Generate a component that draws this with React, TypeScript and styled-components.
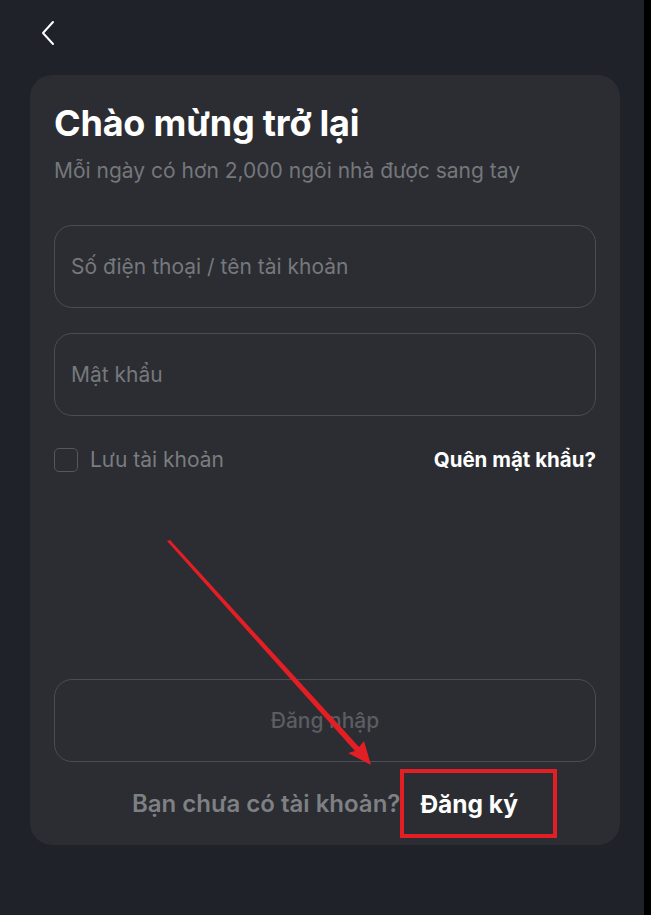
import * as React from 'react';
import styled, { createGlobalStyle } from 'styled-components';

const GlobalStyle = createGlobalStyle`
  html, body {
    margin: 0;
    padding: 0;
    background: #000;
    overflow: hidden;
  }
  body {
    font-family: Inter, "Noto Sans", "Liberation Sans", sans-serif;
  }
`;

const Page = styled.div`
  display: flex;
  width: 651px;
  height: 915px;
  overflow: hidden;
`;

const Screen = styled.div`
  position: relative;
  flex: 1;
  background: #1f2229;
  padding: 0 24px 0 30px;
  box-sizing: border-box;
`;

const Scrollbar = styled.div`
  width: 7px;
  flex-shrink: 0;
  background: #000;
`;

const TopBar = styled.div`
  height: 75px;
  display: flex;
  align-items: center;
  padding-left: 11px;
  padding-bottom: 9px;
  box-sizing: border-box;
`;

const BackButton = styled.button`
  background: none;
  border: none;
  padding: 0;
  display: flex;
  cursor: pointer;
`;

const Card = styled.div`
  height: 770px;
  background: #2b2d32;
  border-radius: 22px;
  padding: 24px 24px 25px;
  box-sizing: border-box;
  display: flex;
  flex-direction: column;
`;

const Title = styled.h1`
  margin: 0;
  font-size: 36px;
  line-height: 48px;
  font-weight: 700;
  color: #fff;
  letter-spacing: -0.2px;
`;

const Subtitle = styled.p`
  margin: 10px 0 0;
  font-size: 21px;
  line-height: 28px;
  color: #75777b;
`;

const Field = styled.div<{ $top: number }>`
  margin-top: ${p => p.$top}px;
  height: 83px;
  border: 1px solid #4b4d52;
  border-radius: 18px;
  box-sizing: border-box;
  display: flex;
  align-items: center;
  padding: 0 16px;
`;

const Input = styled.input`
  flex: 1;
  padding: 0;
  background: transparent;
  border: none;
  outline: none;
  font-family: inherit;
  font-size: 21px;
  color: #fff;
  &::placeholder {
    color: #76787c;
  }
`;

const OptionsRow = styled.div`
  margin-top: 31px;
  display: flex;
  align-items: center;
  justify-content: space-between;
`;

const Remember = styled.label`
  display: flex;
  align-items: center;
  gap: 12px;
  font-size: 21px;
  color: #7a7c80;
`;

const Checkbox = styled.span`
  width: 24px;
  height: 24px;
  border: 1px solid #55575c;
  border-radius: 5px;
  box-sizing: border-box;
`;

const Forgot = styled.a`
  font-size: 20.5px;
  font-weight: 700;
  color: #fff;
  text-decoration: none;
`;

const Spacer = styled.div`
  flex: 1;
`;

const LoginButton = styled.button`
  height: 83px;
  width: 100%;
  flex-shrink: 0;
  background: transparent;
  border: 1px solid #4b4d52;
  border-radius: 18px;
  font-family: inherit;
  font-size: 21px;
  font-weight: 500;
  color: #5b5d62;
`;

const Footer = styled.div`
  margin-top: 26px;
  display: flex;
  justify-content: center;
  align-items: center;
  gap: 20px;
  font-size: 24px;
  line-height: 32px;
  font-weight: 600;
`;

const Muted = styled.span`
  color: #7e8084;
`;

const SignUp = styled.a`
  color: #fff;
  font-weight: 700;
  font-size: 24.5px;
  text-decoration: none;
`;

const Annotation = styled.svg`
  position: absolute;
  left: 0;
  top: 0;
  pointer-events: none;
`;

const HighlightBox = styled.div`
  position: absolute;
  left: 400px;
  top: 769px;
  width: 157px;
  height: 69px;
  border: 4px solid #e31e24;
  box-sizing: border-box;
  pointer-events: none;
`;

export default function App() {
  return (
    <Page>
      <GlobalStyle />
      <Screen>
        <TopBar>
          <BackButton aria-label="Quay lại">
            <svg width="14" height="26" viewBox="0 0 14 26" fill="none">
              <path d="M12 2 L2 13 L12 24" stroke="#fff" strokeWidth="2" strokeLinecap="round" strokeLinejoin="round" />
            </svg>
          </BackButton>
        </TopBar>
        <Card>
          <Title>Chào mừng trở lại</Title>
          <Subtitle>Mỗi ngày có hơn 2,000 ngôi nhà được sang tay</Subtitle>
          <Field $top={40}>
            <Input placeholder="Số điện thoại / tên tài khoản" />
          </Field>
          <Field $top={25}>
            <Input type="password" placeholder="Mật khẩu" />
          </Field>
          <OptionsRow>
            <Remember>
              <Checkbox />
              Lưu tài khoản
            </Remember>
            <Forgot href="#">Quên mật khẩu?</Forgot>
          </OptionsRow>
          <Spacer />
          <LoginButton>Đăng nhập</LoginButton>
          <Footer>
            <Muted>Bạn chưa có tài khoản?</Muted>
            <SignUp href="#">Đăng ký</SignUp>
          </Footer>
        </Card>
        <Annotation width="644" height="915" viewBox="0 0 644 915">
          <polygon points="167,541 170,540 359,747 364,741 371,765 348,753 355,751" fill="#e31e24" />
        </Annotation>
        <HighlightBox />
      </Screen>
      <Scrollbar />
    </Page>
  );
}
